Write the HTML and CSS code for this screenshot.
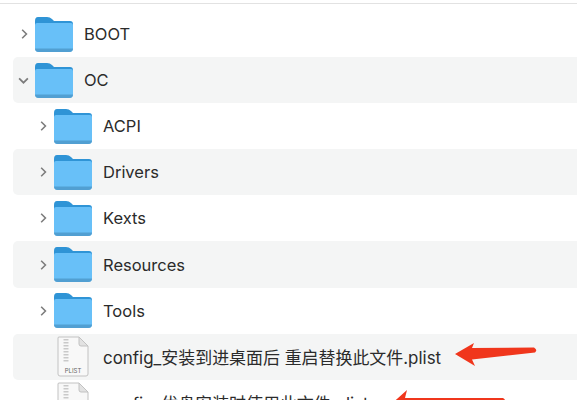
FILE: index.html
```html
<!DOCTYPE html>
<html lang="zh">
<head>
    <meta charset="UTF-8">
    <title>OC</title>
    <link rel="stylesheet" href="styles.css">
</head>
<body>

<svg class="defs" width="0" height="0">
    <symbol id="folder" viewBox="0 0 38 35">
        <path d="M0 4 Q0 0 3 0 H12 Q15 0 17 2 L19 4 H35 Q38 4 38 7 V15 H0 Z" fill="#2f94d6"/>
        <path d="M0 8 Q0 6 2 6 H36 Q38 6 38 8 V31 Q38 35 34 35 H4 Q0 35 0 31 Z" fill="#68c0f8"/>
        <path d="M0 31.5 H38 Q38 35 34 35 H4 Q0 35 0 31.5 Z" fill="#519fd2"/>
    </symbol>
    <symbol id="plist" viewBox="0 0 32 41">
        <path d="M1.5 1 H22 L31 10 V38 Q31 40 29 40 H3 Q1 40 1 38 V2 Z" fill="#f8f8f8" stroke="#c2c2c2"/>
        <path d="M22 1 V8 Q22 10 24 10 H31 Z" fill="#e2e2e2" stroke="#c2c2c2"/>
        <path d="M9 3 V27" stroke="#c9c9c9" stroke-width="5" stroke-dasharray="1.5 1.5"/>
    </symbol>
    <symbol id="closed" viewBox="0 0 9 14">
        <path d="M1.5 1.5 L7 7 L1.5 12.5" fill="none" stroke="#7c7c7c" stroke-width="2"/>
    </symbol>
    <symbol id="open" viewBox="0 0 12 8">
        <path d="M1 1.5 L6 6.5 L11 1.5" fill="none" stroke="#7c7c7c" stroke-width="2"/>
    </symbol>
</svg>

<div class="finder">
    <div class="row">
        <svg class="chev"><use href="#closed"/></svg>
        <svg class="folder"><use href="#folder"/></svg>
        <span class="name">BOOT</span>
    </div>
    <div class="row alt">
        <svg class="chev chev-open"><use href="#open"/></svg>
        <svg class="folder"><use href="#folder"/></svg>
        <span class="name">OC</span>
    </div>
    <div class="row sub">
        <svg class="chev"><use href="#closed"/></svg>
        <svg class="folder"><use href="#folder"/></svg>
        <span class="name">ACPI</span>
    </div>
    <div class="row sub alt">
        <svg class="chev"><use href="#closed"/></svg>
        <svg class="folder"><use href="#folder"/></svg>
        <span class="name">Drivers</span>
    </div>
    <div class="row sub">
        <svg class="chev"><use href="#closed"/></svg>
        <svg class="folder"><use href="#folder"/></svg>
        <span class="name">Kexts</span>
    </div>
    <div class="row sub alt">
        <svg class="chev"><use href="#closed"/></svg>
        <svg class="folder"><use href="#folder"/></svg>
        <span class="name">Resources</span>
    </div>
    <div class="row sub">
        <svg class="chev"><use href="#closed"/></svg>
        <svg class="folder"><use href="#folder"/></svg>
        <span class="name">Tools</span>
    </div>
    <div class="row sub alt">
        <svg class="file"><use href="#plist"/><text x="16" y="37" class="plist-label">PLIST</text></svg>
        <span class="name name-file">config_安装到进桌面后 重启替换此文件.plist</span>
        <svg class="arrow arrow-one" viewBox="0 0 84 26"><path d="M1 12 L20 1 L18 6 L80 5.5 Q84 8 81 10.5 L18 17.5 L21 24 Z" fill="#f0361c"/></svg>
    </div>
    <div class="row sub">
        <svg class="file"><use href="#plist"/></svg>
        <span class="name name-file">config_优盘安装时使用此文件.plist</span>
        <svg class="arrow arrow-two" viewBox="0 0 122 34"><path d="M1 18 L20 1 L18 9 L116 9 Q120 11 117 16 L18 23 L21 33 Z" fill="#f0361c"/></svg>
    </div>
</div>

</body>
</html>
```

FILE: styles.css
```css
html, body {
    margin: 0;
    padding: 0;
    height: 400px;
    overflow: hidden;
    background-color: white;
    color: #2b2b2b;
    font-family: Inter, "Noto Sans CJK SC", sans-serif;
}
.defs {
    display: block;
    height: 0;
}
.finder {
    border-top: 1px solid #e2e2e2;
    margin-top: 3px;
    padding: 7px 0 0 13px;
}
.row {
    position: relative;
    display: flex;
    align-items: center;
    height: 46.1px;
    padding-left: 8px;
    border-radius: 5px 0 0 5px;
}
.row.alt {
    background-color: #f4f5f5;
}
.row.sub {
    padding-left: 27px;
}
.chev {
    width: 7px;
    height: 12px;
    flex: none;
    margin-right: 7px;
}
.chev-open {
    width: 11px;
    height: 7px;
    margin: 0 6px 0 -3px;
}
.folder {
    width: 38px;
    height: 35px;
    flex: none;
}
.file {
    width: 32px;
    height: 41px;
    flex: none;
    margin-left: 17px;
    margin-right: 3px;
}
.plist-label {
    font-size: 6px;
    fill: #666;
    text-anchor: middle;
}
.name {
    margin-left: 11px;
    font-size: 16.5px;
    white-space: nowrap;
}
.name-file {
    font-size: 16.95px;
}
/* flechas rojas encima de la fila */
.arrow {
    position: absolute;
}
.arrow-one {
    left: 441px;
    top: 8px;
    width: 84px;
    height: 26px;
}
.arrow-two {
    left: 374px;
    top: 9px;
    width: 122px;
    height: 34px;
}
```
